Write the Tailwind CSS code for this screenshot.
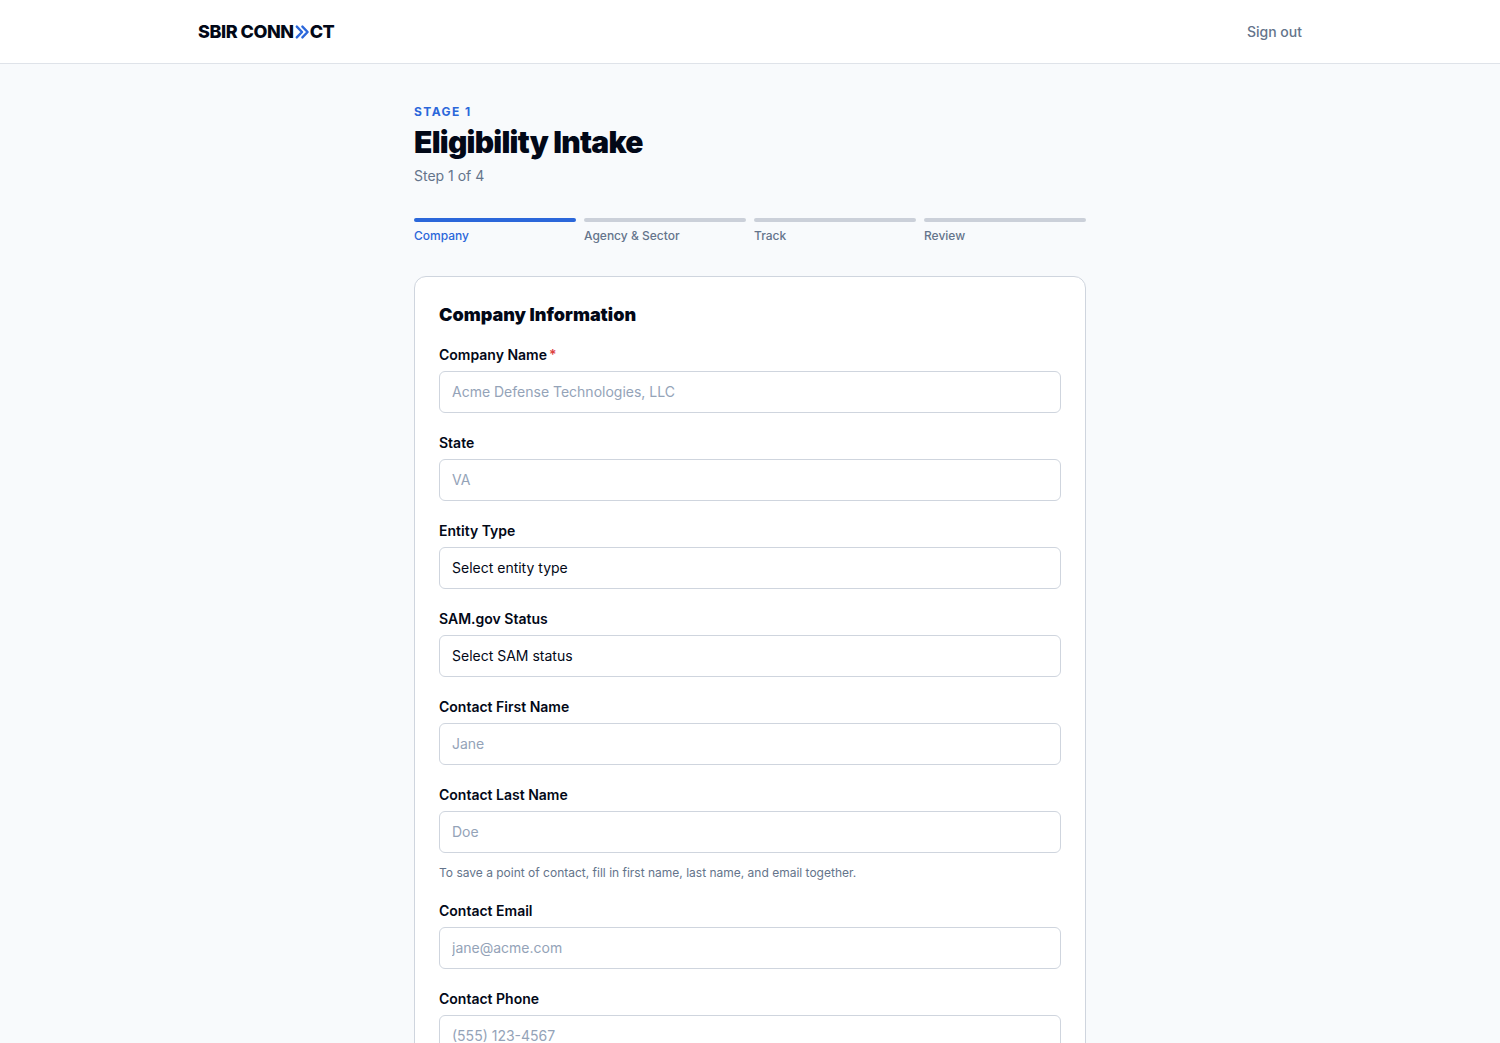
<!DOCTYPE html>
<html lang="en">
<head>
    <meta charset="UTF-8">
    <meta name="viewport" content="width=device-width, initial-scale=1.0">
    <title>SBIR Connect - Eligibility Intake</title>
    <script src="https://cdn.jsdelivr.net/npm/@tailwindcss/browser@4"></script>
</head>
<body class="min-h-screen bg-[#f8fafc] font-['Inter',sans-serif] text-[#020817] antialiased">
    <!-- Header -->
    <header class="h-16 bg-white border-b border-[#dfe3e9]">
        <div class="max-w-[1152px] h-full mx-auto px-6 flex items-center justify-between">
            <a href="#" aria-label="SBIR Connect" class="flex items-center text-lg font-extrabold tracking-tight">
                <span>SBIR CONN</span>
                <svg class="w-4 h-4" viewBox="0 0 16 16" fill="none" stroke="#2b67da" stroke-width="2.4" stroke-linecap="round" stroke-linejoin="round"><path d="M2.8 2.6 8 8l-5.2 5.4M8.4 2.6 13.6 8l-5.2 5.4"/></svg>
                <span>CT</span>
            </a>
            <button type="button" class="text-sm font-medium text-[#64748b]">Sign out</button>
        </div>
    </header>

    <main class="max-w-[720px] mx-auto px-6 py-10">
        <p class="text-xs font-bold tracking-[0.12em] uppercase text-[#2b67da]">Stage 1</p>
        <h1 class="mt-1 text-3xl font-black tracking-tight">Eligibility Intake</h1>
        <p class="mt-1.5 text-sm text-[#64748b]">Step 1 of 4</p>

        <!-- Progress -->
        <ol class="mt-8 grid grid-cols-4 gap-2 text-xs font-medium text-[#64748b]">
            <li class="text-[#2b67da]" aria-current="step"><div class="h-1 mb-1.5 rounded-full bg-[#2b67da]"></div>Company</li>
            <li><div class="h-1 mb-1.5 rounded-full bg-[#cbd0d9]"></div>Agency &amp; Sector</li>
            <li><div class="h-1 mb-1.5 rounded-full bg-[#cbd0d9]"></div>Track</li>
            <li><div class="h-1 mb-1.5 rounded-full bg-[#cbd0d9]"></div>Review</li>
        </ol>

        <form class="mt-8 p-6 bg-white border border-[#cfd5de] rounded-xl">
            <h2 class="text-lg font-black">Company Information</h2>
            <div class="mt-4 space-y-5">
                <div>
                    <label for="company" class="block mb-1.5 text-sm font-semibold">Company Name<span class="ml-0.5 text-[#dc4040]">*</span></label>
                    <input id="company" type="text" required placeholder="Acme Defense Technologies, LLC" class="block w-full px-3 py-2.5 text-sm bg-white border border-[#cfd5de] rounded-md placeholder:text-[#94a3b8]">
                </div>
                <div>
                    <label for="state" class="block mb-1.5 text-sm font-semibold">State</label>
                    <input id="state" type="text" placeholder="VA" class="block w-full px-3 py-2.5 text-sm bg-white border border-[#cfd5de] rounded-md placeholder:text-[#94a3b8]">
                </div>
                <div>
                    <label for="entity-type" class="block mb-1.5 text-sm font-semibold">Entity Type</label>
                    <select id="entity-type" class="block w-full px-3 py-2.5 text-sm bg-white border border-[#cfd5de] rounded-md appearance-none">
                        <option>Select entity type</option>
                    </select>
                </div>
                <div>
                    <label for="sam-status" class="block mb-1.5 text-sm font-semibold">SAM.gov Status</label>
                    <select id="sam-status" class="block w-full px-3 py-2.5 text-sm bg-white border border-[#cfd5de] rounded-md appearance-none">
                        <option>Select SAM status</option>
                    </select>
                </div>
                <div>
                    <label for="first-name" class="block mb-1.5 text-sm font-semibold">Contact First Name</label>
                    <input id="first-name" type="text" placeholder="Jane" class="block w-full px-3 py-2.5 text-sm bg-white border border-[#cfd5de] rounded-md placeholder:text-[#94a3b8]">
                </div>
                <div>
                    <label for="last-name" class="block mb-1.5 text-sm font-semibold">Contact Last Name</label>
                    <input id="last-name" type="text" placeholder="Doe" aria-describedby="contact-hint" class="block w-full px-3 py-2.5 text-sm bg-white border border-[#cfd5de] rounded-md placeholder:text-[#94a3b8]">
                    <p id="contact-hint" class="mt-3 text-xs text-[#64748b]">To save a point of contact, fill in first name, last name, and email together.</p>
                </div>
                <div>
                    <label for="email" class="block mb-1.5 text-sm font-semibold">Contact Email</label>
                    <input id="email" type="email" placeholder="jane@acme.com" class="block w-full px-3 py-2.5 text-sm bg-white border border-[#cfd5de] rounded-md placeholder:text-[#94a3b8]">
                </div>
                <div>
                    <label for="phone" class="block mb-1.5 text-sm font-semibold">Contact Phone</label>
                    <input id="phone" type="tel" placeholder="(555) 123-4567" class="block w-full px-3 py-2.5 text-sm bg-white border border-[#cfd5de] rounded-md placeholder:text-[#94a3b8]">
                </div>
            </div>
        </form>
    </main>
</body>
</html>
